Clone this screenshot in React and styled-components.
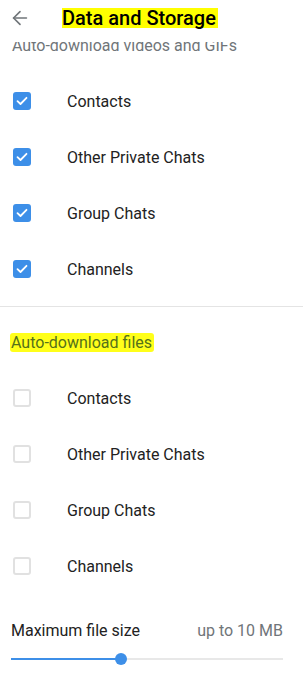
import styled, { createGlobalStyle } from "styled-components";
import { ArrowLeft } from "lucide-react";

const GlobalStyle = createGlobalStyle`
  html, body {
    margin: 0;
    padding: 0;
    background: #fff;
    font-family: Roboto, "Noto Sans", "Liberation Sans", sans-serif;
  }
`;

const Page = styled.div`
  width: 303px;
  height: 683px;
  display: flex;
  flex-direction: column;
  overflow: hidden;
  background: #fff;
`;

const Header = styled.header`
  height: 42px;
  flex: 0 0 42px;
  display: flex;
  align-items: center;
  padding: 0 0 6px 8px;
  background: #fff;
  box-sizing: border-box;
`;

const BackButton = styled.button`
  width: 24px;
  height: 24px;
  padding: 0;
  border: none;
  background: transparent;
  color: #707579;
  display: flex;
  align-items: center;
  justify-content: center;
`;

const Title = styled.h1`
  margin: 0 0 0 30px;
  font-size: 20px;
  font-weight: 500;
  line-height: 20px;
  color: #000;
  background: #ffff00;
  padding: 0 2px 0 0;
`;

// scrolled list, its first caption slides under the header
const Body = styled.div`
  flex: 1;
  overflow: hidden;
`;

const Section = styled.section`
  padding: ${(p) => (p.$first ? "0" : "26px")} 0 9px;
  margin-top: ${(p) => (p.$first ? "-6px" : "0")};
  border-bottom: ${(p) => (p.$last ? "none" : "1px solid #e4e4e4")};
`;

const SectionTitle = styled.h2`
  margin: 0 0 17px;
  padding-left: ${(p) => (p.$marked ? "10px" : "11px")};
  font-size: 16px;
  font-weight: 400;
  line-height: 20px;
  color: ${(p) => (p.$marked ? "#55711a" : "#707579")};
  span {
    background: ${(p) => (p.$marked ? "#ffff1a" : "transparent")};
    padding: 0 ${(p) => (p.$marked ? "2px" : "0")} 0 1px;
    border-radius: 3px;
  }
`;

const Row = styled.label`
  height: 56px;
  display: flex;
  align-items: center;
  padding-left: 13px;
`;

const Box = styled.span`
  width: 18px;
  height: 18px;
  box-sizing: border-box;
  border-radius: 3px;
  background: ${(p) => (p.$checked ? "#3d8fe8" : "#fff")};
  border: ${(p) => (p.$checked ? "none" : "2px solid #e1e1e1")};
  display: flex;
  align-items: center;
  justify-content: center;
  flex-shrink: 0;
`;

const Label = styled.span`
  margin-left: 36px;
  font-size: 16px;
  color: #222;
`;

const SizeBlock = styled.div`
  padding: 18px 20px 0 11px;
`;

const SizeRow = styled.div`
  display: flex;
  justify-content: space-between;
  font-size: 16px;
  line-height: 20px;
  color: #222;
`;

const SizeValue = styled.span`
  color: #707579;
`;

const Slider = styled.div`
  position: relative;
  height: 12px;
  margin-top: 12px;
  display: flex;
  align-items: center;
`;

const Track = styled.div`
  height: 2px;
  width: 100%;
  background: #e8e8e8;
`;

const Fill = styled.div`
  height: 2px;
  background: #3d8fe8;
`;

const Thumb = styled.div`
  position: absolute;
  top: 0;
  width: 12px;
  height: 12px;
  border-radius: 50%;
  background: #3d8fe8;
  transform: translateX(-6px);
`;

function Check({ checked }) {
  return (
    <Box $checked={checked}>
      {checked && (
        <svg width="12" height="10" viewBox="0 0 12 10">
          <path
            d="M1.5 5.2 L4.5 8 L10.5 1.8"
            fill="none"
            stroke="#fff"
            strokeWidth="1.8"
            strokeLinecap="round"
            strokeLinejoin="round"
          />
        </svg>
      )}
    </Box>
  );
}

const chats = ["Contacts", "Other Private Chats", "Group Chats", "Channels"];

function App() {
  const ratio = 110 / 272;
  return (
    <Page>
      <GlobalStyle />
      <Header>
        <BackButton>
          <ArrowLeft size={22} strokeWidth={1.8} />
        </BackButton>
        <Title>Data and Storage</Title>
      </Header>
      <Body>
        <Section $first>
          <SectionTitle>
            <span>Auto-download videos and GIFs</span>
          </SectionTitle>
          {chats.map((c) => (
            <Row key={c}>
              <Check checked />
              <Label>{c}</Label>
            </Row>
          ))}
        </Section>
        <Section $last>
          <SectionTitle $marked>
            <span>Auto-download files</span>
          </SectionTitle>
          {chats.map((c) => (
            <Row key={c}>
              <Check checked={false} />
              <Label>{c}</Label>
            </Row>
          ))}
        </Section>
        <SizeBlock>
          <SizeRow>
            <span>Maximum file size</span>
            <SizeValue>up to 10 MB</SizeValue>
          </SizeRow>
          <Slider>
            <Track>
              <Fill style={{ width: `${ratio * 100}%` }} />
            </Track>
            <Thumb style={{ left: `${ratio * 100}%` }} />
          </Slider>
        </SizeBlock>
      </Body>
    </Page>
  );
}

export default App;
